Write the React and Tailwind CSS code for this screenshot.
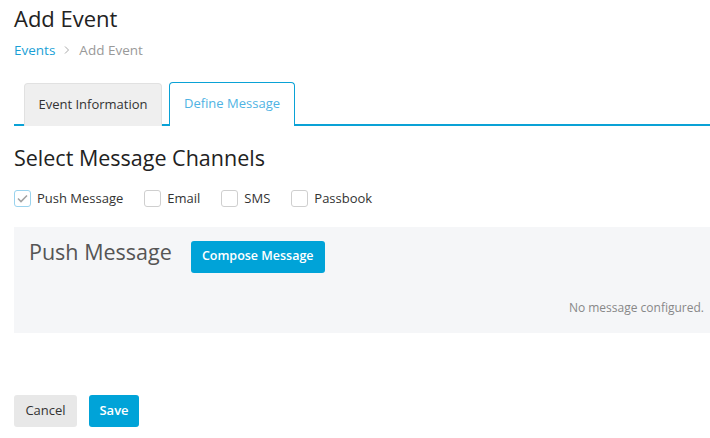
import React, { useState } from "react";

const channels = ["Push Message", "Email", "SMS", "Passbook"];

const Checkbox = ({ label, checked, onChange }) => (
  <label className="flex items-center gap-[6px] cursor-pointer">
    <span
      className={
        "flex h-[17px] w-[17px] items-center justify-center rounded-[3px] border bg-white " +
        (checked ? "border-[#9ad3ee]" : "border-[#cfcfcf]")
      }
      onClick={onChange}
    >
      {checked && (
        <svg width="11" height="9" viewBox="0 0 11 9" fill="none">
          <path d="M1 4.5L4 7.5L10 1.5" stroke="#a3a3a3" strokeWidth="1.6" />
        </svg>
      )}
    </span>
    <span className="text-[13px] text-[#333]">{label}</span>
  </label>
);

export default function App() {
  const [selected, setSelected] = useState(["Push Message"]);
  const [tab, setTab] = useState("message");

  const toggle = (c) =>
    setSelected((s) => (s.includes(c) ? s.filter((x) => x !== c) : [...s, c]));

  return (
    <div className="h-[438px] w-[710px] overflow-hidden bg-white font-['Open_Sans',sans-serif] text-[#333]">
      <h1 className="pl-[14px] pt-[3px] text-[22px] leading-[30px] text-[#222]">Add Event</h1>
      <div className="mt-[8px] flex items-center gap-[7px] pl-[14px] text-[13.5px] leading-[18px]">
        <span className="text-[#1a9fd6]">Events</span>
        <svg width="8" height="10" viewBox="0 0 8 10" className="mx-[1px]">
          <path d="M2 1.5L5.5 5L2 8.5" stroke="#aaa" strokeWidth="1" fill="none" />
        </svg>
        <span className="text-[#999]">Add Event</span>
      </div>

      <div className="ml-[14px] mt-[23px] flex items-end gap-[7px] border-b-2 border-[#0aa2d6] pl-[10px]">
        <button
          onClick={() => setTab("info")}
          className="-mb-[2px] h-[43px] w-[138px] rounded-t-[4px] border border-b-0 border-[#e1e1e1] bg-[#efefef] text-[13px] text-[#333]"
        >
          Event Information
        </button>
        <button
          onClick={() => setTab("message")}
          className="-mb-[2px] h-[44px] w-[126px] rounded-t-[4px] border border-b-0 border-[#0aa2d6] bg-white pb-[1px] text-[13px] text-[#4fb3e3]"
        >
          Define Message
        </button>
      </div>

      <h2 className="mt-[18px] pl-[14px] text-[21.5px] leading-[28px] text-[#222]">Select Message Channels</h2>

      <div className="mt-[17px] flex items-center gap-[21px] pl-[14px]">
        {channels.map((c) => (
          <Checkbox key={c} label={c} checked={selected.includes(c)} onChange={() => toggle(c)} />
        ))}
      </div>

      <div className="ml-[14px] mt-[18px] h-[106px] bg-[#f5f6f8] pl-[15px] pr-[6px]">
        <div className="flex items-start gap-[19px] pt-[11px]">
          <h3 className="text-[21.5px] leading-[28px] text-[#555]">Push Message</h3>
          <button className="mt-[3px] h-[32px] w-[134px] rounded-[3px] bg-[#00a3d8] text-[12.5px] font-semibold text-white">
            Compose Message
          </button>
        </div>
        <p className="mt-[26px] text-right text-[12px] text-[#888]">No message configured.</p>
      </div>

      <div className="mt-[62px] flex gap-[12px] pl-[14px]">
        <button className="h-[32px] w-[63px] rounded-[3px] bg-[#e8e8e8] text-[13px] text-[#333]">Cancel</button>
        <button className="h-[32px] w-[50px] rounded-[3px] bg-[#00a3d8] text-[13px] font-semibold text-white">Save</button>
      </div>
    </div>
  );
}
